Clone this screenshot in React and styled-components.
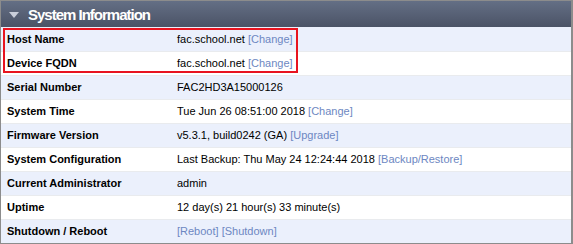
import React from 'react'
import styled, { createGlobalStyle } from 'styled-components'

const GlobalStyle = createGlobalStyle`
    html, body {
        margin: 0;
        padding: 0;
        background: #ffffff;
    }
    body {
        font-family: "Liberation Sans", Arial, sans-serif;
    }
`

const Panel = styled.div`
    position: relative;
    width: 573px;
    height: 244px;
    box-sizing: border-box;
    border: 1px solid #8c8c8c;
    border-right-width: 2px;
    overflow: hidden;
`

const Header = styled.div`
    height: 26px;
    display: flex;
    align-items: center;
    gap: 9px;
    padding-left: 8px;
    background: linear-gradient(to bottom, #646f85 0%, #4b5366 100%);
    color: #ffffff;
    font-size: 15px;
    font-weight: 700;
    letter-spacing: -1px;
`

const Arrow = styled.span`
    width: 0;
    height: 0;
    margin-top: 2px;
    border-left: 5px solid transparent;
    border-right: 5px solid transparent;
    border-top: 6px solid #c9ceda;
`

const Table = styled.div`
    display: flex;
    flex-direction: column;
`

const Row = styled.div`
    height: 24px;
    display: grid;
    grid-template-columns: 170px 1fr;
    align-items: center;
    padding: 0 0 2px 6px;
    font-size: 11px;
    color: #000000;
    background-color: ${({ $shade }) => ($shade ? '#ebf0fc' : '#ffffff')};
    border-top: 1px solid ${({ $first }) => ($first ? 'transparent' : '#e9ebee')};
    box-sizing: border-box;
`

const Label = styled.span`
    font-weight: 700;
`

const Value = styled.span`
    white-space: nowrap;
`

const Action = styled.a`
    color: #6d87c2;
    text-decoration: none;
    cursor: pointer;
`

const Highlight = styled.div`
    position: absolute;
    left: 2px;
    top: 27px;
    width: 295px;
    height: 45px;
    border: 2px solid #e8141f;
    box-sizing: border-box;
    pointer-events: none;
`

const rows = [
    { label: 'Host Name', value: 'fac.school.net', actions: ['Change'] },
    { label: 'Device FQDN', value: 'fac.school.net', actions: ['Change'] },
    { label: 'Serial Number', value: 'FAC2HD3A15000126' },
    { label: 'System Time', value: 'Tue Jun 26 08:51:00 2018', actions: ['Change'] },
    { label: 'Firmware Version', value: 'v5.3.1, build0242 (GA)', actions: ['Upgrade'] },
    { label: 'System Configuration', value: 'Last Backup: Thu May 24 12:24:44 2018', actions: ['Backup/Restore'] },
    { label: 'Current Administrator', value: 'admin' },
    { label: 'Uptime', value: '12 day(s) 21 hour(s) 33 minute(s)' },
    { label: 'Shutdown / Reboot', value: '', actions: ['Reboot', 'Shutdown'] },
]

const App = () => {
    return (
        <>
            <GlobalStyle />
            <Panel>
                <Header>
                    <Arrow />
                    System Information
                </Header>
                <Table>
                    {rows.map((row, index) => (
                        <Row key={row.label} $shade={index % 2 === 0} $first={index === 0}>
                            <Label>{row.label}</Label>
                            <Value>
                                {row.value}
                                {row.actions?.map((action, i) => (
                                    <React.Fragment key={action}>
                                        {(row.value || i > 0) ? ' ' : ''}
                                        <Action>[{action}]</Action>
                                    </React.Fragment>
                                ))}
                            </Value>
                        </Row>
                    ))}
                </Table>
                <Highlight />
            </Panel>
        </>
    )
}

export default App
